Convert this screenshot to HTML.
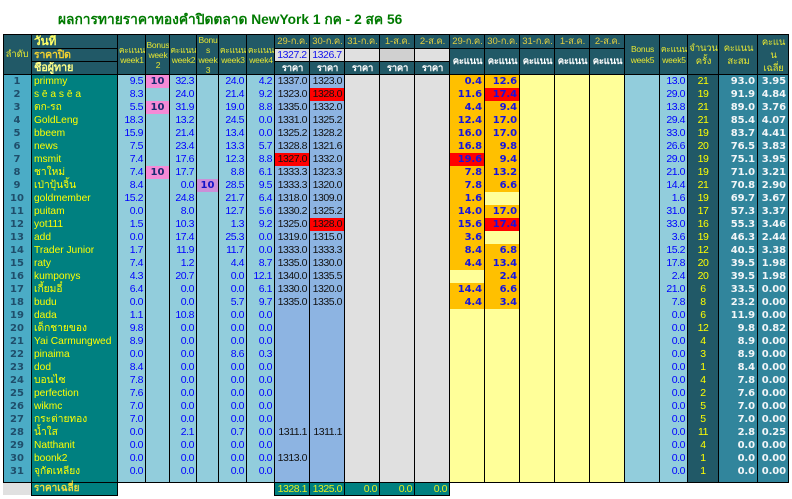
<!DOCTYPE html>
<html lang="th"><head><meta charset="utf-8"><title>ผลการทายราคาทองคำปิดตลาด</title>
<style>
html,body{margin:0;padding:0;background:#fff}
#p{position:relative;width:792px;height:499px;overflow:hidden;background:#fff;font-family:"Liberation Sans","Noto Sans CJK SC",sans-serif}
#p div{position:absolute;box-sizing:border-box}
.t{top:75px;height:407px;line-height:13px;white-space:pre;font-size:10.5px;letter-spacing:-.45px;text-align:right;padding-right:2px}
.b{color:#0000ff}
.k{color:#111}
.s{font-family:"DejaVu Sans",sans-serif;font-weight:bold;font-size:10px;letter-spacing:-.1px;color:#1414e0}
.w{font-family:"DejaVu Sans",sans-serif;font-weight:bold;font-size:10px;letter-spacing:-.1px;color:#f2f6f8}
.h{display:flex;align-items:center;justify-content:center;text-align:center;background:#215967;color:#e6e632;font-size:8.5px;line-height:10px;letter-spacing:-.2px;overflow:hidden}
.d{font-size:9.5px;color:#e0cc40;letter-spacing:-.1px}
.v{background:#000}
.r{height:13px}
.g{font-family:"DejaVu Sans",sans-serif;font-weight:bold;font-size:10px;line-height:13px;color:#1a2a70;text-align:center;white-space:pre}
.f{top:483px;height:12px;background:#008080;color:#e6f020;font-size:10.5px;letter-spacing:-.45px;line-height:12px;text-align:right;padding-right:2px}
</style></head><body><div id="p">

<div style="left:58px;top:11px;width:400px;height:18px;line-height:18px;color:#007a00;font-weight:bold;font-size:13.75px;white-space:nowrap">ผลการทายราคาทองคำปิดตลาด NewYork 1 กค - 2 สค 56</div>

<!-- column backgrounds -->
<div style="left:3px;top:75px;width:28px;height:407px;background:#4bacc6"></div>
<div style="left:31px;top:75px;width:87px;height:407px;background:#008080"></div>
<div style="left:117px;top:75px;width:157px;height:407px;background:#92cddc"></div>
<div style="left:274px;top:75px;width:70px;height:407px;background:#8db4e2"></div>
<div style="left:344px;top:75px;width:105px;height:407px;background:#e0e0e0"></div>
<div style="left:449px;top:75px;width:175px;height:407px;background:#ffff99"></div>
<div style="left:624px;top:75px;width:63px;height:407px;background:#92cddc"></div>
<div style="left:687px;top:75px;width:31px;height:407px;background:#215967"></div>
<div style="left:718px;top:75px;width:70px;height:407px;background:#31859c"></div>

<!-- highlight cells -->
<div class="r" style="left:146px;top:75px;width:23px;background:#f58ad6"></div>
<div class="r" style="left:146px;top:101px;width:23px;background:#f58ad6"></div>
<div class="r" style="left:146px;top:166px;width:23px;background:#f58ad6"></div>
<div class="r" style="left:197px;top:179px;width:21px;background:#cc8fd8"></div>
<div class="r" style="left:310px;top:88px;width:34px;background:#ff0000"></div>
<div class="r" style="left:275px;top:153px;width:34px;background:#ff0000"></div>
<div class="r" style="left:310px;top:218px;width:34px;background:#ff0000"></div>
<div style="left:449px;top:75px;width:35px;height:195px;background:#ffc000"></div>
<div style="left:449px;top:283px;width:35px;height:26px;background:#ffc000"></div>
<div style="left:484px;top:75px;width:35px;height:117px;background:#ffc000"></div>
<div style="left:484px;top:205px;width:35px;height:26px;background:#ffc000"></div>
<div style="left:484px;top:244px;width:35px;height:65px;background:#ffc000"></div>
<div class="r" style="left:449px;top:153px;width:35px;background:#ff0000"></div>
<div class="r" style="left:484px;top:88px;width:35px;background:#ff0000"></div>
<div class="r" style="left:484px;top:218px;width:35px;background:#ff0000"></div>

<!-- headers -->
<div class="h" style="left:3px;top:35px;width:28px;height:40px;font-size:9.5px">ลำดับ</div>
<div class="h" style="left:31px;top:35px;width:87px;height:13px;justify-content:flex-start;padding-left:3px;font-size:12px;line-height:13px;font-weight:bold;color:#ffff66">วันที่</div>
<div class="h" style="left:31px;top:49px;width:87px;height:12px;justify-content:flex-start;padding-left:3px;font-size:10.5px;line-height:12px;font-weight:bold;color:#f0d030">ราคาปิด</div>
<div class="h" style="left:31px;top:62px;width:87px;height:13px;justify-content:flex-start;padding-left:3px;font-size:11px;line-height:13px;font-weight:bold;color:#ffff88">ชื่อผู้ทาย</div>
<div class="h" style="left:118px;top:35px;width:28px;height:40px">คะแนน<br>week1</div>
<div class="h" style="left:146px;top:35px;width:24px;height:40px">Bonus<br>week<br>2</div>
<div class="h" style="left:170px;top:35px;width:27px;height:40px">คะแนน<br>week2</div>
<div class="h" style="left:197px;top:35px;width:22px;height:40px;line-height:10px">Bonu<br>s<br>week<br>3</div>
<div class="h" style="left:219px;top:35px;width:28px;height:40px">คะแนน<br>week3</div>
<div class="h" style="left:247px;top:35px;width:28px;height:40px">คะแนน<br>week4</div>

<div class="h d" style="left:275px;top:35px;width:35px;height:13px">29-ก.ค.</div>
<div class="h d" style="left:310px;top:35px;width:35px;height:13px">30-ก.ค.</div>
<div class="h d" style="left:345px;top:35px;width:35px;height:13px">31-ก.ค.</div>
<div class="h d" style="left:380px;top:35px;width:35px;height:13px">1-ส.ค.</div>
<div class="h d" style="left:415px;top:35px;width:35px;height:13px">2-ส.ค.</div>
<div class="h d" style="left:450px;top:35px;width:35px;height:13px">29-ก.ค.</div>
<div class="h d" style="left:485px;top:35px;width:35px;height:13px">30-ก.ค.</div>
<div class="h d" style="left:520px;top:35px;width:35px;height:13px">31-ก.ค.</div>
<div class="h d" style="left:555px;top:35px;width:35px;height:13px">1-ส.ค.</div>
<div class="h d" style="left:590px;top:35px;width:35px;height:13px">2-ส.ค.</div>

<div class="h b" style="left:275px;top:49px;width:34px;height:12px;background:#e0e0e0;color:#1010ee;font-size:10.5px;letter-spacing:-.45px">1327.2</div>
<div class="h b" style="left:310px;top:49px;width:34px;height:12px;background:#e0e0e0;color:#1010ee;font-size:10.5px;letter-spacing:-.45px">1326.7</div>
<div style="left:345px;top:49px;width:34px;height:12px;background:#e0e0e0"></div>
<div style="left:380px;top:49px;width:34px;height:12px;background:#d0d0d0"></div>
<div style="left:415px;top:49px;width:34px;height:12px;background:#e0e0e0"></div>

<div class="h" style="left:275px;top:62px;width:35px;height:13px;font-size:9.5px;color:#fff;font-weight:bold">ราคา</div>
<div class="h" style="left:310px;top:62px;width:35px;height:13px;font-size:9.5px;color:#fff;font-weight:bold">ราคา</div>
<div class="h" style="left:345px;top:62px;width:35px;height:13px;font-size:9.5px;color:#fff;font-weight:bold">ราคา</div>
<div class="h" style="left:380px;top:62px;width:35px;height:13px;font-size:9.5px;color:#fff;font-weight:bold">ราคา</div>
<div class="h" style="left:415px;top:62px;width:35px;height:13px;font-size:9.5px;color:#fff;font-weight:bold">ราคา</div>

<div class="h" style="left:450px;top:49px;width:35px;height:26px;font-size:9.5px;color:#fff;font-weight:bold">คะแนน</div>
<div class="h" style="left:485px;top:49px;width:35px;height:26px;font-size:9.5px;color:#fff;font-weight:bold">คะแนน</div>
<div class="h" style="left:520px;top:49px;width:35px;height:26px;font-size:9.5px;color:#fff;font-weight:bold">คะแนน</div>
<div class="h" style="left:555px;top:49px;width:35px;height:26px;font-size:9.5px;color:#fff;font-weight:bold">คะแนน</div>
<div class="h" style="left:590px;top:49px;width:35px;height:26px;font-size:9.5px;color:#fff;font-weight:bold">คะแนน</div>

<div class="h" style="left:625px;top:35px;width:35px;height:40px;line-height:11px">Bonus<br>week5</div>
<div class="h" style="left:660px;top:35px;width:28px;height:40px;line-height:11px">คะแนน<br>week5</div>
<div class="h" style="left:688px;top:35px;width:31px;height:40px;font-size:9.5px;line-height:13px">จำนวน<br>ครั้ง</div>
<div class="h" style="left:719px;top:35px;width:39px;height:40px;font-size:9.5px;line-height:13px">คะแนน<br>สะสม</div>
<div class="h" style="left:758px;top:35px;width:31px;height:40px;font-size:9.5px;line-height:13px">คะแน<br>น<br>เฉลี่ย</div>

<!-- rank -->
<div class="g" style="left:3px;top:75px;width:28px;height:407px;color:#1f4e6b">1
2
3
4
5
6
7
8
9
10
11
12
13
14
15
16
17
18
19
20
21
22
23
24
25
26
27
28
29
30
31</div>

<!-- names -->
<div class="t" style="left:34px;width:84px;text-align:left;padding:0;color:#ffff00;font-size:10.2px;letter-spacing:0">primmy
s ē a s ē a
ตก-รถ
GoldLeng
bbeem
news
msmit
ชาใหม่
เป่าปุ้นจิ้น
goldmember
puitam
yot111
add
Trader Junior
raty
kumponys
เกี้ยมอี๋
budu
dada
เด็กชายของ
Yai Carmungwed
pinaima
dod
บอนไซ
perfection
wikmc
กระต่ายทอง
น้ำใส
Natthanit
boonk2
จุกัดเหลียง</div>

<div class="t b" style="left:118px;width:27px">9.5
8.3
5.5
18.3
15.9
7.5
7.4
7.4
8.4
15.2
0.0
1.5
0.0
1.7
7.4
4.3
6.4
0.0
1.1
9.8
8.9
0.0
8.4
7.8
7.6
7.0
7.0
0.0
0.0
0.0
0.0</div>

<div class="g" style="left:146px;top:75px;width:23px;height:130px;color:#1a2a70">10

10




10</div>

<div class="t b" style="left:170px;width:26px">32.3
24.0
31.9
13.2
21.4
23.4
17.6
17.7
0.0
24.8
8.0
10.3
17.4
11.9
1.2
20.7
0.0
0.0
10.8
0.0
0.0
0.0
0.0
0.0
0.0
0.0
0.0
2.1
0.0
0.0
0.0</div>

<div class="g" style="left:197px;top:179px;width:21px;height:13px;color:#1414c8">10</div>

<div class="t b" style="left:219px;width:27px">24.0
21.4
19.0
24.5
13.4
13.3
12.3
8.8
28.5
21.7
12.7
1.3
25.3
11.7
4.4
0.0
0.0
5.7
0.0
0.0
0.0
8.6
0.0
0.0
0.0
0.0
0.0
0.7
0.0
0.0
0.0</div>

<div class="t b" style="left:247px;width:27px">4.2
9.2
8.8
0.0
0.0
5.7
8.8
6.1
9.5
6.4
5.6
9.2
0.0
0.0
8.7
12.1
6.1
9.7
0.0
0.0
0.0
0.3
0.0
0.0
0.0
0.0
0.0
0.0
0.0
0.0
0.0</div>

<div class="t k" style="left:275px;width:34px">1337.0
1323.0
1335.0
1331.0
1325.2
1328.8
1327.0
1333.3
1333.3
1318.0
1330.2
1325.0
1319.0
1333.0
1335.0
1340.0
1330.0
1335.0









1311.1

1313.0</div>

<div class="t k" style="left:310px;width:34px">1323.0
1328.0
1332.0
1325.2
1328.2
1321.6
1332.0
1323.3
1320.0
1309.0
1325.2
1328.0
1315.0
1333.3
1330.0
1335.5
1320.0
1335.0









1311.1</div>

<div class="t s" style="left:450px;width:34px">0.4
11.6
4.4
12.4
16.0
16.8
19.6
7.8
7.8
1.6
14.0
15.6
3.6
8.4
4.4

14.4
4.4</div>

<div class="t s" style="left:485px;width:34px">12.6
17.4
9.4
17.0
17.0
9.8
9.4
13.2
6.6

17.0
17.4

6.8
13.4
2.4
6.6
3.4</div>

<div class="t b" style="left:660px;width:27px">13.0
29.0
13.8
29.4
33.0
26.6
29.0
21.0
14.4
1.6
31.0
33.0
3.6
15.2
17.8
2.4
21.0
7.8
0.0
0.0
0.0
0.0
0.0
0.0
0.0
0.0
0.0
0.0
0.0
0.0
0.0</div>

<div class="t" style="left:688px;width:30px;text-align:center;padding:0;color:#ffff00">21
19
21
21
19
20
19
19
21
19
17
16
19
12
20
20
6
8
6
12
4
3
1
4
2
5
5
11
4
1
1</div>

<div class="t w" style="left:719px;width:38px">93.0
91.9
89.0
85.4
83.7
76.5
75.1
71.0
70.8
69.7
57.3
55.3
46.3
40.5
39.5
39.5
33.5
23.2
11.9
9.8
8.9
8.9
8.4
7.8
7.6
7.0
7.0
2.8
0.0
0.0
0.0</div>

<div class="t w" style="left:758px;width:30px">3.95
4.84
3.76
4.07
4.41
3.83
3.95
3.21
2.90
3.67
3.37
3.46
2.44
3.38
1.98
1.98
0.00
0.00
0.00
0.82
0.00
0.00
0.00
0.00
0.00
0.00
0.00
0.25
0.00
0.00
0.00</div>

<!-- grid lines -->
<div class="v" style="left:3px;top:34px;width:786px;height:1px"></div>
<div class="v" style="left:31px;top:48px;width:87px;height:1px"></div>
<div class="v" style="left:31px;top:61px;width:87px;height:1px"></div>
<div class="v" style="left:274px;top:48px;width:351px;height:1px"></div>
<div class="v" style="left:274px;top:61px;width:176px;height:1px"></div>
<div class="v" style="left:3px;top:74px;width:786px;height:1px"></div>
<div class="v" style="left:3px;top:482px;width:786px;height:1px"></div>

<div class="v" style="left:3px;top:34px;width:1px;height:449px"></div>
<div class="v" style="left:31px;top:34px;width:1px;height:449px"></div>
<div class="v" style="left:117px;top:34px;width:1px;height:449px"></div>
<div class="v" style="left:145px;top:34px;width:1px;height:449px"></div>
<div class="v" style="left:169px;top:34px;width:1px;height:449px"></div>
<div class="v" style="left:196px;top:34px;width:1px;height:449px"></div>
<div class="v" style="left:218px;top:34px;width:1px;height:449px"></div>
<div class="v" style="left:246px;top:34px;width:1px;height:449px"></div>
<div class="v" style="left:274px;top:34px;width:1px;height:449px"></div>
<div class="v" style="left:309px;top:34px;width:1px;height:449px"></div>
<div class="v" style="left:344px;top:34px;width:1px;height:449px"></div>
<div class="v" style="left:379px;top:34px;width:1px;height:449px"></div>
<div class="v" style="left:414px;top:34px;width:1px;height:449px"></div>
<div class="v" style="left:449px;top:34px;width:1px;height:449px"></div>
<div class="v" style="left:484px;top:34px;width:1px;height:449px"></div>
<div class="v" style="left:519px;top:34px;width:1px;height:449px"></div>
<div class="v" style="left:554px;top:34px;width:1px;height:449px"></div>
<div class="v" style="left:589px;top:34px;width:1px;height:449px"></div>
<div class="v" style="left:624px;top:34px;width:1px;height:449px"></div>
<div class="v" style="left:659px;top:34px;width:1px;height:449px"></div>
<div class="v" style="left:687px;top:34px;width:1px;height:449px"></div>
<div class="v" style="left:718px;top:34px;width:1px;height:449px"></div>
<div class="v" style="left:757px;top:34px;width:1px;height:449px"></div>
<div class="v" style="left:788px;top:34px;width:1px;height:449px"></div>

<!-- footer -->
<div style="left:3px;top:483px;width:28px;height:12px;background:#e0e0e0"></div>
<div class="f" style="left:32px;width:85px;text-align:left;padding-left:2px;font-weight:bold;letter-spacing:0;font-size:10px;color:#f0e040">ราคาเฉลี่ย</div>
<div class="f" style="left:275px;width:34px">1328.1</div>
<div class="f" style="left:310px;width:34px">1325.0</div>
<div class="f" style="left:345px;width:34px">0.0</div>
<div class="f" style="left:380px;width:34px">0.0</div>
<div class="f" style="left:415px;width:34px">0.0</div>
<div class="v" style="left:31px;top:483px;width:1px;height:13px"></div>
<div class="v" style="left:117px;top:483px;width:1px;height:13px"></div>
<div class="v" style="left:274px;top:483px;width:1px;height:13px"></div>
<div class="v" style="left:309px;top:483px;width:1px;height:13px"></div>
<div class="v" style="left:344px;top:483px;width:1px;height:13px"></div>
<div class="v" style="left:379px;top:483px;width:1px;height:13px"></div>
<div class="v" style="left:414px;top:483px;width:1px;height:13px"></div>
<div class="v" style="left:449px;top:483px;width:1px;height:13px"></div>
<div class="v" style="left:31px;top:495px;width:87px;height:1px"></div>
<div class="v" style="left:274px;top:495px;width:176px;height:1px"></div>
</div></body></html>
